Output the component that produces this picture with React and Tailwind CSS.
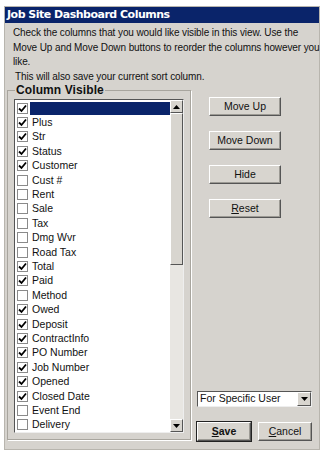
import { useState } from 'react';

const columns = [
  { label: '', checked: true },
  { label: 'Plus', checked: true },
  { label: 'Str', checked: true },
  { label: 'Status', checked: true },
  { label: 'Customer', checked: true },
  { label: 'Cust #', checked: false },
  { label: 'Rent', checked: false },
  { label: 'Sale', checked: false },
  { label: 'Tax', checked: false },
  { label: 'Dmg Wvr', checked: false },
  { label: 'Road Tax', checked: false },
  { label: 'Total', checked: true },
  { label: 'Paid', checked: true },
  { label: 'Method', checked: false },
  { label: 'Owed', checked: true },
  { label: 'Deposit', checked: true },
  { label: 'ContractInfo', checked: true },
  { label: 'PO Number', checked: true },
  { label: 'Job Number', checked: true },
  { label: 'Opened', checked: true },
  { label: 'Closed Date', checked: true },
  { label: 'Event End', checked: false },
  { label: 'Delivery', checked: false },
];

function CheckBox({ checked }) {
  return (
    <span className="w-[11px] h-[11px] shrink-0 bg-white border border-[#8a8a8a] flex items-center justify-center">
      {checked && (
        <svg width="9" height="9" viewBox="0 0 9 9">
          <path d="M1 4.5 L3.5 7 L8 1.5" stroke="#000" strokeWidth="1.8" fill="none" />
        </svg>
      )}
    </span>
  );
}

function Button({ children, className = '', bold = false }) {
  return (
    <button
      className={`h-[19px] bg-[#d8d5cf] border border-t-white border-l-white border-r-[#555] border-b-[#555] shadow-[inset_-1px_-1px_0_#9c9a94] text-[10.5px] text-[#111] ${bold ? 'font-bold' : ''} ${className}`}
    >
      {children}
    </button>
  );
}

function ScrollArrow({ up }) {
  return (
    <div className="h-[13px] w-[13px] bg-[#d8d5cf] border border-t-white border-l-white border-r-[#555] border-b-[#555] flex items-center justify-center">
      <svg width="7" height="4" viewBox="0 0 7 4">
        <path d={up ? 'M0 4 L3.5 0 L7 4 Z' : 'M0 0 L3.5 4 L7 0 Z'} fill="#000" />
      </svg>
    </div>
  );
}

export default function App() {
  const [rows, setRows] = useState(columns);

  const toggle = (index) => {
    setRows(rows.map((row, i) => (i === index ? { ...row, checked: !row.checked } : row)));
  };

  return (
    <div className="w-[325px] h-[453px] bg-white pt-[6px] pl-[4px] font-['Liberation_Sans',Arial,sans-serif] text-[#111]">
      <div className="w-[316px] h-[444px] bg-[#d6d3ce] border border-[#b8b5ae] flex flex-col">
        <div className="h-[16px] bg-[#0a246a] text-white font-bold text-[11px] leading-[16px] px-[2px] font-['DejaVu_Sans',sans-serif] tracking-[-0.5px]">
          Job Site Dashboard Columns
        </div>

        <div className="px-[8px] pt-[3px] h-[61px] text-[10px] leading-[14.5px] tracking-[-0.1px] whitespace-nowrap">
          <p>
            Check the columns that you would like visible in this view. Use the
            <br />
            Move Up and Move Down buttons to reorder the columns however you
            <br />
            like.
          </p>
          <p className="pl-[2px]">This will also save your current sort column.</p>
        </div>

        <div className="flex flex-1 pl-[2px]">
          <fieldset className="w-[184px] h-[356px] border border-[#a8a59e] shadow-[1px_1px_0_#fff] px-[6px] pb-[8px]">
            <legend className="font-bold text-[12px] leading-[13px] px-[1px] ml-[1px] tracking-[0.1px]">Column Visible</legend>
            <div className="h-[334px] bg-white border border-t-[#555] border-l-[#555] border-r-[#eee] border-b-[#eee] flex mt-[2px]">
              <div className="flex-1 flex flex-col pt-[1px]">
                {rows.map((row, i) => (
                  <div
                    key={i}
                    onClick={() => toggle(i)}
                    className="h-[14.45px] flex items-center pl-[2px] text-[10.5px]"
                  >
                    <CheckBox checked={row.checked} />
                    <span
                      className={`ml-[2px] flex-1 h-[13px] leading-[13px] pl-[2px] ${i === 0 ? 'bg-[#0a246a] text-white' : ''}`}
                    >
                      {row.label}
                    </span>
                  </div>
                ))}
              </div>
              <div className="w-[13px] bg-[#e8e6e2] flex flex-col justify-between">
                <div>
                  <ScrollArrow up />
                  <div className="h-[152px] w-[13px] bg-[#d8d5cf] border border-t-white border-l-white border-r-[#555] border-b-[#555]" />
                </div>
                <ScrollArrow />
              </div>
            </div>
          </fieldset>

          <div className="flex-1 flex flex-col pl-[6px] pr-[7px]">
            <div className="flex flex-col gap-[15px] pl-[12px] pt-[13px]">
              <Button className="w-[72px]">Move Up</Button>
              <Button className="w-[72px]">Move Down</Button>
              <Button className="w-[72px]">Hide</Button>
              <Button className="w-[72px]"><span className="underline">R</span>eset</Button>
            </div>
            <div className="mt-auto mb-[8px] flex flex-col gap-[15px]">
              <div className="h-[16px] bg-white border border-t-[#555] border-l-[#555] border-r-[#eee] border-b-[#eee] flex items-center">
                <span className="flex-1 text-[10.5px] pl-[2px]">For Specific User</span>
                <div className="h-[14px] w-[14px] bg-[#d8d5cf] border border-t-white border-l-white border-r-[#555] border-b-[#555] flex items-center justify-center">
                  <svg width="7" height="4" viewBox="0 0 7 4">
                    <path d="M0 0 L3.5 4 L7 0 Z" fill="#000" />
                  </svg>
                </div>
              </div>
              <div className="flex justify-between">
                <Button bold className="w-[54px] outline outline-1 outline-[#222]"><span className="underline">S</span>ave</Button>
                <Button className="w-[54px]"><span className="underline">C</span>ancel</Button>
              </div>
            </div>
          </div>
        </div>
      </div>
    </div>
  );
}
